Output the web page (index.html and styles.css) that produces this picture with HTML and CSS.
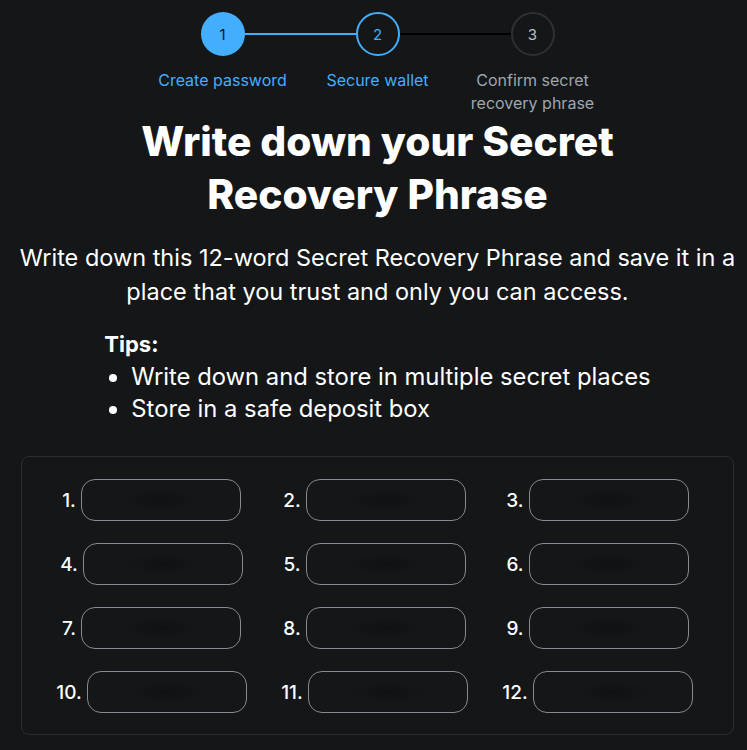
FILE: index.html
```html
<!DOCTYPE html>
<html>
<head>
<meta charset="utf-8">
<link rel="stylesheet" href="styles.css">
</head>
<body>
<main class="page">
  <div class="stepper">
    <div class="circles">
      <div class="circle done">1</div>
      <div class="line blue"></div>
      <div class="circle active">2</div>
      <div class="line dark"></div>
      <div class="circle todo">3</div>
    </div>
    <div class="labels">
      <div class="label blue-text">Create password</div>
      <div class="label blue-text">Secure wallet</div>
      <div class="label grey-text">Confirm secret recovery phrase</div>
    </div>
  </div>

  <h1 class="title">Write down your Secret Recovery Phrase</h1>
  <p class="intro">Write down this 12-word Secret Recovery Phrase and save it in a place that you trust and only you can access.</p>

  <div class="tips">
    <div class="tips-title">Tips:</div>
    <ul class="tips-list">
      <li>Write down and store in multiple secret places</li>
      <li>Store in a safe deposit box</li>
    </ul>
  </div>

  <section class="phrase-box">
    <div class="word"><span class="num">1.</span><span class="pill"></span></div>
    <div class="word"><span class="num">2.</span><span class="pill"></span></div>
    <div class="word"><span class="num">3.</span><span class="pill"></span></div>
    <div class="word"><span class="num">4.</span><span class="pill"></span></div>
    <div class="word"><span class="num">5.</span><span class="pill"></span></div>
    <div class="word"><span class="num">6.</span><span class="pill"></span></div>
    <div class="word"><span class="num">7.</span><span class="pill"></span></div>
    <div class="word"><span class="num">8.</span><span class="pill"></span></div>
    <div class="word"><span class="num">9.</span><span class="pill"></span></div>
    <div class="word"><span class="num">10.</span><span class="pill"></span></div>
    <div class="word"><span class="num">11.</span><span class="pill"></span></div>
    <div class="word"><span class="num">12.</span><span class="pill"></span></div>
  </section>
</main>
</body>
</html>
```
FILE: styles.css
```css
html, body {
  margin: 0;
  padding: 0;
  background: #141618;
  color: #ffffff;
  font-family: "Inter", "Liberation Sans", sans-serif;
}

.page {
  padding: 12px 13px 0 21px;
  display: flex;
  flex-direction: column;
  align-items: stretch;
}

.stepper {
  display: flex;
  flex-direction: column;
  align-items: center;
}

.circles {
  display: flex;
  align-items: center;
}

.circle {
  width: 44px;
  height: 44px;
  box-sizing: border-box;
  border-radius: 50%;
  display: flex;
  align-items: center;
  justify-content: center;
  font-size: 15px;
}

.circle.done {
  background: #43aefc;
  color: #141618;
}

.circle.active {
  border: 2px solid #43aefc;
  color: #43aefc;
}

.circle.todo {
  border: 2px solid #2e3134;
  color: #bbc0c5;
}

.line {
  width: 111px;
  height: 2px;
}

.line.blue { background: #43aefc; }
.line.dark { background: #000000; }

.labels {
  display: flex;
  margin-top: 13px;
}

.label {
  width: 155px;
  text-align: center;
  font-size: 16px;
  line-height: 23px;
  padding: 0 6px;
  box-sizing: border-box;
}

.blue-text { color: #43aefc; }
.grey-text { color: #9fa6ae; }

.title {
  margin: 0 auto;
  max-width: 540px;
  text-align: center;
  font-size: 40.7px;
  font-weight: 800;
  line-height: 53px;
}

.intro {
  margin: 20px -10px 0;
  text-align: center;
  font-size: 23.5px;
  line-height: 34px;
}

.tips {
  align-self: center;
  margin-top: 19px;
  font-size: 23.8px;
}

.tips-title {
  font-weight: 700;
  font-size: 22px;
  line-height: 33px;
}

.tips-list {
  margin: 0;
  padding-left: 27px;
  line-height: 32px;
}

.phrase-box {
  margin-top: 31px;
  border: 1px solid #2a2d31;
  border-radius: 8px;
  display: grid;
  grid-template-columns: repeat(3, 223px);
  justify-content: center;
  row-gap: 22px;
  padding: 22px 24px 21px 18px;
  width: 713px;
  box-sizing: border-box;
}

.word {
  display: flex;
  align-items: center;
  justify-content: center;
}

.num {
  font-size: 19px;
  font-weight: 500;
  margin-right: 5px;
}

.pill {
  width: 160px;
  height: 42px;
  box-sizing: border-box;
  border: 1px solid #858b92;
  border-radius: 14px;
  background: radial-gradient(ellipse 40px 10px at 50% 50%, rgba(10, 12, 14, 0.5), rgba(10, 12, 14, 0));
}
```
